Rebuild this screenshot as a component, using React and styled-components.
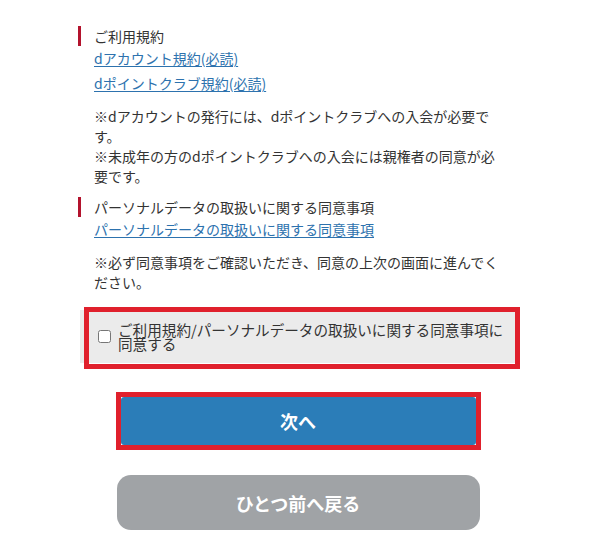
import styled, { createGlobalStyle } from "styled-components";

const GlobalStyle = createGlobalStyle`
  body {
    margin: 0;
    background: #fff;
    font-family: "Noto Sans CJK JP", "Noto Sans", sans-serif;
    color: #333;
  }
`;

const Page = styled.div`
  width: 442px;
  padding: 26px 0 16px 78px;
`;

const Section = styled.section`
  margin-bottom: ${(p) => p.$gap || 0}px;
`;

const SectionTitle = styled.h3`
  margin: 0;
  padding-left: 13px;
  border-left: 3px solid #b3132d;
  font-size: 14px;
  font-weight: normal;
  line-height: 20px;
  color: #333;
`;

const LinkList = styled.div`
  padding-left: 16px;
  display: flex;
  flex-direction: column;
  align-items: flex-start;
`;

const TermLink = styled.a`
  font-size: 14px;
  line-height: 25px;
  color: #2d72ae;
  text-decoration: underline;
  text-underline-offset: 2px;
`;

const Note = styled.p`
  margin: 10px 0 0;
  padding-left: 16px;
  width: 412px;
  font-size: 14px;
  line-height: 20px;
  color: #333;
`;

const AgreeBox = styled.label`
  position: relative;
  margin: 18px 0 0 2px;
  width: 435px;
  height: 53px;
  box-sizing: border-box;
  background: #ebebeb;
  display: flex;
  align-items: center;
  gap: 7px;
  padding: 0 2px 0 18px;
`;

const Highlight = styled.span`
  position: absolute;
  top: -3px;
  left: 4px;
  right: -5px;
  bottom: -6px;
  border: 5px solid #e0202c;
  pointer-events: none;
`;

const CheckBox = styled.input`
  flex: none;
  width: 13px;
  height: 13px;
  margin: 0;
`;

const AgreeText = styled.span`
  font-size: 14.6px;
  line-height: 14px;
  color: #333;
`;

const Buttons = styled.div`
  display: flex;
  flex-direction: column;
  align-items: center;
  padding-right: 2px;
  margin-top: 29px;
  gap: 25px;
`;

const NextFrame = styled.div`
  width: 365px;
  height: 58px;
  box-sizing: border-box;
  border: 5px solid #e0202c;
  display: flex;
`;

const Button = styled.button`
  flex: ${(p) => (p.$fill ? 1 : "none")};
  width: ${(p) => (p.$width ? `${p.$width}px` : "auto")};
  height: ${(p) => (p.$height ? `${p.$height}px` : "auto")};
  border: none;
  border-radius: ${(p) => p.$radius}px;
  background: ${(p) => p.$bg};
  color: #fff;
  font-family: "Noto Sans CJK JP", sans-serif;
  font-size: 18px;
  font-weight: bold;
  cursor: pointer;
`;

export default function App() {
  return (
    <>
      <GlobalStyle />
      <Page>
        <Section $gap={11}>
          <SectionTitle>ご利用規約</SectionTitle>
          <LinkList>
            <TermLink href="#">dアカウント規約(必読)</TermLink>
            <TermLink href="#">dポイントクラブ規約(必読)</TermLink>
          </LinkList>
          <Note>
            ※dアカウントの発行には、dポイントクラブへの入会が必要です。
            <br />
            ※未成年の方のdポイントクラブへの入会には親権者の同意が必要です。
          </Note>
        </Section>
        <Section>
          <SectionTitle>パーソナルデータの取扱いに関する同意事項</SectionTitle>
          <LinkList>
            <TermLink href="#">パーソナルデータの取扱いに関する同意事項</TermLink>
          </LinkList>
          <Note>
            ※必ず同意事項をご確認いただき、同意の上次の画面に進んでください。
          </Note>
        </Section>
        <AgreeBox>
          <CheckBox type="checkbox" />
          <AgreeText>
            ご利用規約/パーソナルデータの取扱いに関する同意事項に同意する
          </AgreeText>
          <Highlight />
        </AgreeBox>
        <Buttons>
          <NextFrame>
            <Button $fill $bg="#2b7db8" $radius={3}>次へ</Button>
          </NextFrame>
          <Button $bg="#a0a3a6" $radius={14} $width={363} $height={55}>
            ひとつ前へ戻る
          </Button>
        </Buttons>
      </Page>
    </>
  );
}
